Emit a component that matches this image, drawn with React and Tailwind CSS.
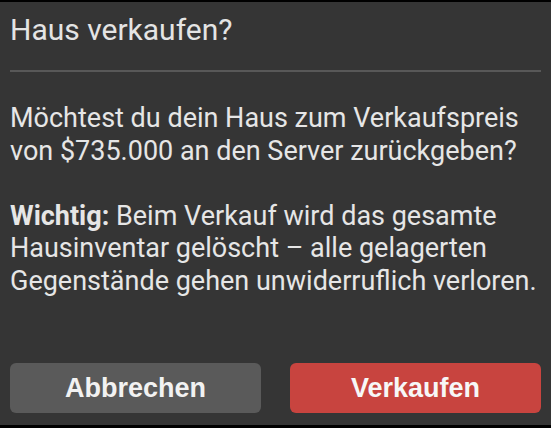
import React from "react";

const App = () => {
  return (
    <div className="w-[551px] h-[428px] bg-black pt-[2px] pb-[3px] flex flex-col">
      <div className="flex-1 flex flex-col bg-[#353535] px-[10px] pb-[12px] font-['Roboto',sans-serif]">
        {/* Kopfzeile */}
        <h1 className="pt-[12px] text-[30px] leading-[32px] text-[#e4e4e4] font-normal">
          Haus verkaufen?
        </h1>
        <div className="mt-[24px] h-[2px] bg-[#585858]" />

        {/* Inhalt */}
        <div className="mt-[30px] text-[27px] leading-[32.5px] text-[#e6e6e6]">
          <p>
            Möchtest du dein Haus zum Verkaufspreis von $735.000 an den Server
            zurückgeben?
          </p>
          <p className="mt-[32.5px]">
            <span className="font-bold">Wichtig:</span> Beim Verkauf wird das
            gesamte Hausinventar gelöscht – alle gelagerten Gegenstände gehen
            unwiderruflich verloren.
          </p>
        </div>

        {/* Aktionen */}
        <div className="mt-auto flex gap-[29px]">
          <button className="flex-1 h-[50px] rounded-[6px] bg-[#5a5a5a] text-[#f2f2f2] text-[27px] font-bold font-['Liberation_Sans',Arial,sans-serif]">
            Abbrechen
          </button>
          <button className="flex-1 h-[50px] rounded-[6px] bg-[#c8443f] text-[#f7f7f7] text-[27px] font-bold font-['Liberation_Sans',Arial,sans-serif]">
            Verkaufen
          </button>
        </div>
      </div>
    </div>
  );
};

export default App;
